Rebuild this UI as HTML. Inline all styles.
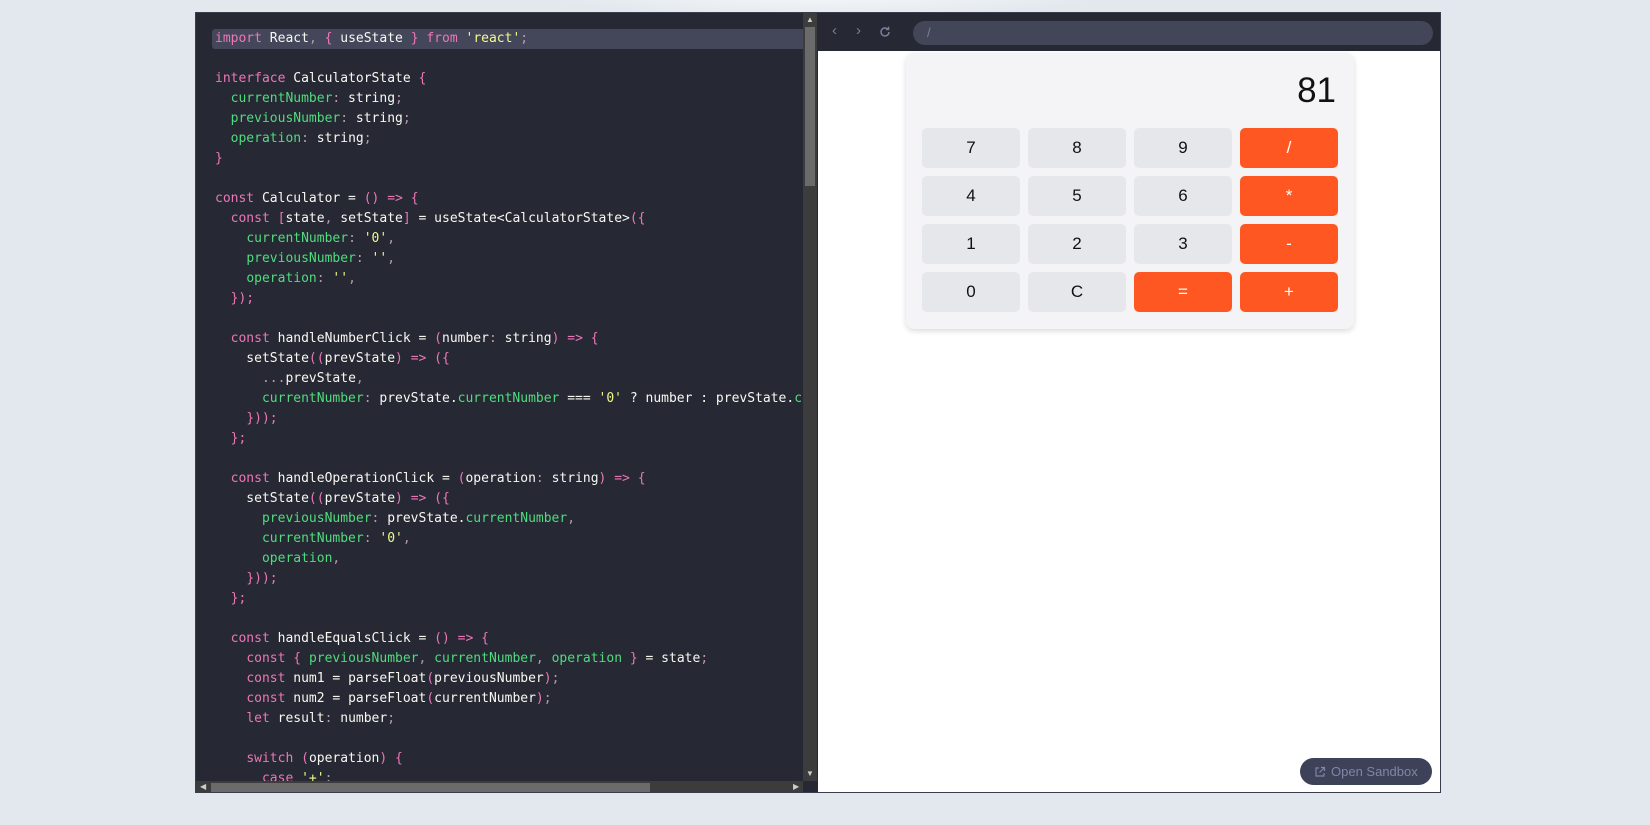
<!DOCTYPE html>
<html><head><meta charset="utf-8"><style>
*{margin:0;padding:0;box-sizing:border-box}
body{width:1650px;height:825px;background:#e2e8ee;position:relative;overflow:hidden;font-family:"Liberation Sans",sans-serif}
.glow{position:absolute;left:500px;top:-60px;width:650px;height:80px;background:radial-gradient(ellipse at center,#ffffff 0%,rgba(255,255,255,0) 70%)}
.frame{position:absolute;left:195px;top:12px;width:1246px;height:781px;background:#262833;border:1px solid #3a3d4c;overflow:hidden}
.editor{position:absolute;left:0;top:0;width:607px;height:768px;overflow:hidden;background:#262833}
.code{position:absolute;left:0;top:16px;font-family:"DejaVu Sans Mono","Liberation Mono",monospace;font-size:13px;line-height:20px;color:#f8f8f2;white-space:nowrap}
.code div{height:20px;padding-left:19px;white-space:pre}
.code .hl{background:#444759;margin-left:16px;padding-left:3px;border-radius:3px;width:600px}
.k{color:#ec77b8}.g{color:#4fdc7e}.s{color:#f1fa8c}.p{color:#ec77b8}.c{color:#b59ab0}
.vs{position:absolute;left:607px;top:0;width:14px;height:768px;background:#3c3c3c}
.vs .th{position:absolute;left:2px;top:14px;width:10px;height:159px;background:#6b6b6b}
.hs{position:absolute;left:0;top:768px;width:607px;height:13px;background:#3c3c3c}
.hs .th{position:absolute;left:15px;top:2px;width:439px;height:9px;background:#6b6b6b}
.arr{position:absolute;color:#ccc;font-size:8px;line-height:8px}
.prev{position:absolute;left:622px;top:0;width:624px;height:781px;background:#fff}
.bar{position:absolute;left:0;top:0;width:624px;height:38px;background:#262833}
.url{position:absolute;left:95px;top:8px;width:520px;height:24px;border-radius:12px;background:#434659;color:#7a7fa0;font-size:13px;line-height:24px;padding-left:14px}
.nav{position:absolute;top:9px;color:#7a7fa0;font-size:15px}
.card{position:absolute;left:88px;top:40px;width:448px;height:276px;background:#f4f4f6;border-radius:8px;box-shadow:0 2px 6px rgba(0,0,0,.15)}
.disp{position:absolute;right:18px;top:18px;font-size:35px;color:#111}
.btn{position:absolute;width:98px;height:40px;border-radius:5px;background:#e5e7eb;color:#111;font-size:17px;text-align:center;line-height:40px}
.o{background:#ff5722;color:#fff}
.sb{position:absolute;left:482px;top:745px;width:132px;height:27px;border-radius:14px;background:#3e4258;color:#7f86a6;font-size:13px;line-height:27px;padding-left:31px}
</style></head><body>
<div class="glow"></div>
<div class="frame">
<div class="editor"><div class="code"><div class="hl"><span class="k">import</span> React<span class="c">,</span> <span class="p">{</span> useState <span class="p">}</span> <span class="k">from</span> <span class="s">'react'</span><span class="c">;</span></div><div></div><div><span class="k">interface</span> CalculatorState <span class="p">{</span></div><div>  <span class="g">currentNumber</span><span class="c">:</span> string<span class="c">;</span></div><div>  <span class="g">previousNumber</span><span class="c">:</span> string<span class="c">;</span></div><div>  <span class="g">operation</span><span class="c">:</span> string<span class="c">;</span></div><div><span class="p">}</span></div><div></div><div><span class="k">const</span> Calculator = <span class="p">()</span> <span class="p">=&gt;</span> <span class="p">{</span></div><div>  <span class="k">const</span> <span class="p">[</span>state<span class="c">,</span> setState<span class="p">]</span> = useState&lt;CalculatorState&gt;<span class="p">({</span></div><div>    <span class="g">currentNumber</span><span class="c">:</span> <span class="s">'0'</span><span class="c">,</span></div><div>    <span class="g">previousNumber</span><span class="c">:</span> <span class="s">''</span><span class="c">,</span></div><div>    <span class="g">operation</span><span class="c">:</span> <span class="s">''</span><span class="c">,</span></div><div>  <span class="p">});</span></div><div></div><div>  <span class="k">const</span> handleNumberClick = <span class="p">(</span>number<span class="c">:</span> string<span class="p">)</span> <span class="p">=&gt;</span> <span class="p">{</span></div><div>    setState<span class="p">((</span>prevState<span class="p">)</span> <span class="p">=&gt;</span> <span class="p">({</span></div><div>      <span class="c">...</span>prevState<span class="c">,</span></div><div>      <span class="g">currentNumber</span><span class="c">:</span> prevState.<span class="g">currentNumber</span> === <span class="s">'0'</span> ? number : prevState.<span class="g">currentNumber</span> + number,</div><div>    <span class="p">}));</span></div><div>  <span class="p">};</span></div><div></div><div>  <span class="k">const</span> handleOperationClick = <span class="p">(</span>operation<span class="c">:</span> string<span class="p">)</span> <span class="p">=&gt;</span> <span class="p">{</span></div><div>    setState<span class="p">((</span>prevState<span class="p">)</span> <span class="p">=&gt;</span> <span class="p">({</span></div><div>      <span class="g">previousNumber</span><span class="c">:</span> prevState.<span class="g">currentNumber</span><span class="c">,</span></div><div>      <span class="g">currentNumber</span><span class="c">:</span> <span class="s">'0'</span><span class="c">,</span></div><div>      <span class="g">operation</span><span class="c">,</span></div><div>    <span class="p">}));</span></div><div>  <span class="p">};</span></div><div></div><div>  <span class="k">const</span> handleEqualsClick = <span class="p">()</span> <span class="p">=&gt;</span> <span class="p">{</span></div><div>    <span class="k">const</span> <span class="p">{</span> <span class="g">previousNumber</span><span class="c">,</span> <span class="g">currentNumber</span><span class="c">,</span> <span class="g">operation</span> <span class="p">}</span> = state<span class="c">;</span></div><div>    <span class="k">const</span> num1 = parseFloat<span class="p">(</span>previousNumber<span class="p">)</span><span class="c">;</span></div><div>    <span class="k">const</span> num2 = parseFloat<span class="p">(</span>currentNumber<span class="p">)</span><span class="c">;</span></div><div>    <span class="k">let</span> result<span class="c">:</span> number<span class="c">;</span></div><div></div><div>    <span class="k">switch</span> <span class="p">(</span>operation<span class="p">)</span> <span class="p">{</span></div><div>      <span class="k">case</span> <span class="s">'+'</span><span class="c">:</span></div></div></div>
<div class="vs"><div class="th"></div><div class="arr" style="left:3px;top:3px">▲</div><div class="arr" style="left:3px;top:757px">▼</div></div>
<div class="hs"><div class="th"></div><div class="arr" style="left:4px;top:2px">◀</div><div class="arr" style="left:597px;top:2px">▶</div></div>
<div class="prev">
<div class="bar">
<span class="nav" style="left:14px">&#8249;</span><span class="nav" style="left:38px">&#8250;</span>
<svg style="position:absolute;left:60px;top:12px" width="14" height="14" viewBox="0 0 14 14" fill="none" stroke="#7a7fa0" stroke-width="1.5"><path d="M11 7a4 4 0 1 1-1.2-2.9"/><path d="M10.5 1.8v2.6H8"/></svg>
<div class="url">/</div>
</div>
<div class="card">
<div class="disp">81</div>
<div class="btn" style="left:16px;top:75px">7</div><div class="btn" style="left:122px;top:75px">8</div><div class="btn" style="left:228px;top:75px">9</div><div class="btn o" style="left:334px;top:75px">/</div>
<div class="btn" style="left:16px;top:123px">4</div><div class="btn" style="left:122px;top:123px">5</div><div class="btn" style="left:228px;top:123px">6</div><div class="btn o" style="left:334px;top:123px">*</div>
<div class="btn" style="left:16px;top:171px">1</div><div class="btn" style="left:122px;top:171px">2</div><div class="btn" style="left:228px;top:171px">3</div><div class="btn o" style="left:334px;top:171px">-</div>
<div class="btn" style="left:16px;top:219px">0</div><div class="btn" style="left:122px;top:219px">C</div><div class="btn o" style="left:228px;top:219px">=</div><div class="btn o" style="left:334px;top:219px">+</div>
</div>
<div class="sb"><svg style="position:absolute;left:14px;top:8px" width="12" height="12" viewBox="0 0 12 12" fill="none" stroke="#7f86a6" stroke-width="1.2"><path d="M5 2H2v8h8V7"/><path d="M7 1.5h3.5V5M10.5 1.5L5.5 6.5"/></svg>Open Sandbox</div>
</div>
</div>
</body></html>
